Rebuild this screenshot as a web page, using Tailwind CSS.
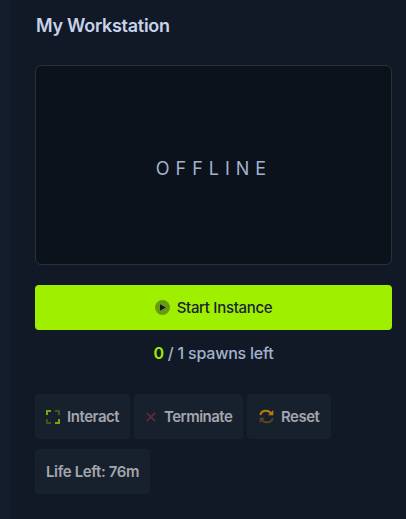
<!DOCTYPE html>
<html lang="en">
<head>
    <meta charset="UTF-8">
    <meta name="viewport" content="width=device-width, initial-scale=1.0">
    <title>My Workstation</title>
    <script src="https://cdn.jsdelivr.net/npm/@tailwindcss/browser@4"></script>
</head>
<body class="bg-[#111927] h-screen flex overflow-hidden font-['Inter',sans-serif]">
    <aside class="w-[10px] shrink-0 bg-[#141d2b]"></aside>
    <main class="flex-1 pl-[25px] pr-[14px] pt-[13px]">
        <h1 class="h-[26px] pl-px text-[18px] leading-[26px] font-semibold tracking-[-0.28px] text-[#c7d3eb] whitespace-nowrap">My Workstation</h1>

        <div class="mt-[26px] h-[200px] rounded-md border border-[#2c3032] bg-[#0b121b] flex items-center justify-center">
            <span class="pt-[8px] pl-[1px] text-[18px] leading-6 tracking-[6px] text-[#a4b1cd]">OFFLINE</span>
        </div>

        <button class="mt-[20px] h-[45px] w-full rounded bg-[#9fef00] flex items-center justify-center text-[15px] font-medium text-[#1a2332]">
            <svg class="w-[15px] h-[15px] mr-[7px]" viewBox="0 0 15 15">
                <circle cx="7.5" cy="7.5" r="7.5" fill="#141d2b" fill-opacity="0.4"/>
                <path d="M5 4.2v6.6l5.8-3.3z" fill="#111927"/>
            </svg>
            <span class="pt-[2px] tracking-[-0.3px]">Start Instance</span>
        </button>

        <p class="mt-[11px] h-6 text-center text-[16px] leading-6 font-medium tracking-[-0.22px] text-[#a4b1cd]"><span class="font-semibold text-[#9fef00]">0</span> / 1 spawns left</p>

        <div class="mt-[29px] flex flex-wrap gap-x-1 gap-y-[10px] text-[15px] font-semibold text-[#a3a6ac] whitespace-nowrap">
            <button class="h-[45px] w-[95px] pl-[11px] rounded bg-[#17202d] flex items-center">
                <svg class="w-[14px] h-[14px] mr-[7px]" viewBox="0 0 14 14" fill="none" stroke="#72a80b" stroke-width="2">
                    <path d="M1 5V1h4M13 9v4H9"/>
                    <path d="M9 1h4v4M5 13H1V9" opacity="0.4"/>
                </svg>
                <span class="pt-[2px] tracking-[-0.45px]">Interact</span>
            </button>
            <button class="h-[45px] w-[109px] pl-[12px] rounded bg-[#17202d] flex items-center">
                <svg class="w-[10px] h-[10px] mr-[8px]" viewBox="0 0 10 10" fill="none" stroke="#602a35" stroke-width="1.8">
                    <path d="M.8.8l8.4 8.4M9.2.8L.8 9.2"/>
                </svg>
                <span class="pt-[2px] tracking-[-0.52px]">Terminate</span>
            </button>
            <button class="h-[45px] w-[84px] pl-[12px] rounded bg-[#17202d] flex items-center">
                <svg class="w-[15px] h-[15px] mr-[7px]" viewBox="0 0 15 15" fill="none" stroke="#b97d0d" stroke-width="2">
                    <path d="M1.3 6C2.5 1 9 0 12.4 4.6"/>
                    <path d="M14.3 1v5.2H9.1z" fill="#b97d0d" stroke="none"/>
                    <g opacity="0.4">
                        <path d="M13.7 9C12.5 14 6 15 2.6 10.4"/>
                        <path d="M.7 14V8.8h5.2z" fill="#b97d0d" stroke="none"/>
                    </g>
                </svg>
                <span class="pt-[2px] tracking-[-0.5px]">Reset</span>
            </button>
            <div class="h-[45px] w-[115px] pl-[11px] rounded bg-[#17202d] flex items-center">
                <span class="pt-[2px] tracking-[-0.38px]">Life Left: 76m</span>
            </div>
        </div>
    </main>
</body>
</html>
